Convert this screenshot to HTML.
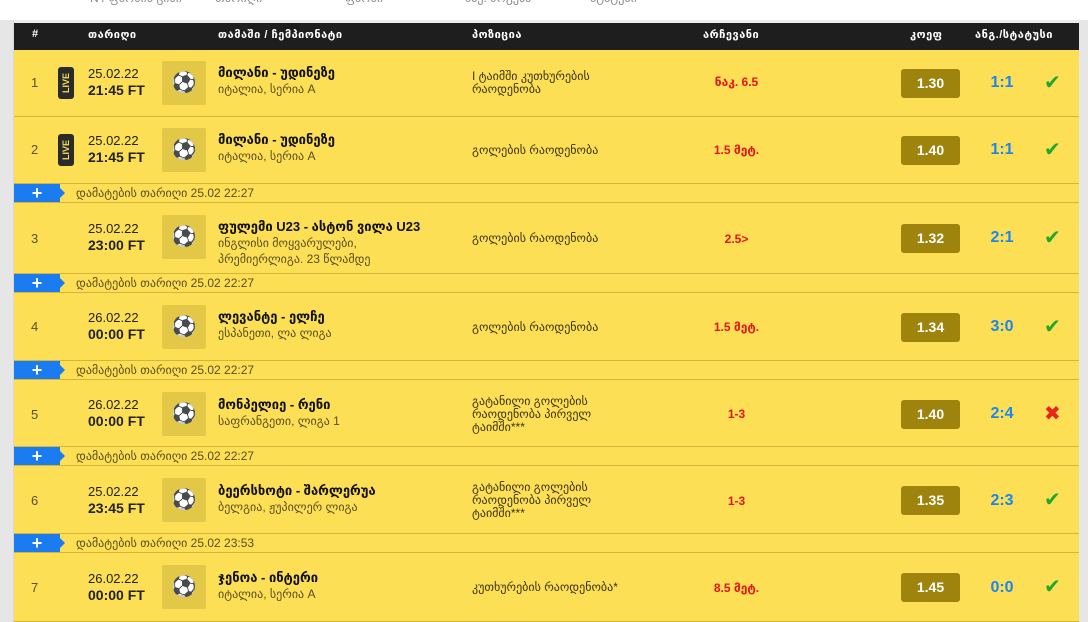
<!DOCTYPE html><html><head><meta charset="utf-8"><style>
*{margin:0;padding:0;box-sizing:border-box}
body{width:1088px;height:622px;overflow:hidden;background:#fff;font-family:"Liberation Sans","DejaVu Sans",sans-serif;position:relative}
.a{position:absolute}
.gl{left:0;top:20px;width:14px;height:602px;background:#e6e6e6;border-right:1px solid #d8d8d8}
.gr{left:1079px;top:20px;width:9px;height:602px;background:#e6e6e6}
.gt{left:0;top:20px;width:1088px;height:3px;background:#ececec}
.hd{left:14px;top:23px;width:1065px;height:27px;background:#1e1e1e;color:#fff;font-size:11px;font-weight:bold}
.hd span{position:absolute;top:5px;letter-spacing:0.5px}
.row{position:absolute;left:14px;width:1065px;background:#fcdf55;border-bottom:1px solid #d4b53a}
.row>*{position:absolute}
.num{left:17px;font-size:13px;color:#5a5030}
.live{left:44px;width:16px;height:32px;background:#2a2a2a;border-radius:3px;color:#fcdf55;font-size:9px;font-weight:bold;writing-mode:vertical-rl;transform:rotate(180deg);text-align:center;line-height:16px}
.dt{left:74px;font-size:13px;color:#222;line-height:16px}
.dt b{font-size:14px}
.ic{left:148px;width:44px;height:44px;background:#e2c846;border-radius:2px;font-size:20px;text-align:center;line-height:44px}
.tt{left:204px;font-size:13px;font-weight:bold;color:#111;line-height:16px}
.tt div{font-weight:normal;font-size:12px;color:#5a4d20;line-height:16px}
.ps{left:458px;font-size:12px;color:#3a3215;line-height:13px;width:160px}
.ch{left:640px;width:165px;text-align:center;font-size:12px;font-weight:bold;color:#e4151a}
.od{left:887px;width:59px;height:29px;background:#9e830d;border-radius:3px;color:#fff;font-weight:bold;font-size:14px;text-align:center;line-height:29px}
.sc{left:965px;width:46px;text-align:center;font-weight:bold;font-size:16px;color:#1a86f0}
.st{left:1030px;font-size:20px;font-weight:bold}
.add{position:absolute;left:14px;width:1065px;height:19px;background:#fcdf55;border-bottom:1px solid #d4b53a}
.tag{position:absolute;left:0;top:0;width:46px;height:18px;background:#1a7cf0;color:#fff;font-weight:bold;font-size:18px;line-height:18px;text-align:center}
.tag:after{content:"";position:absolute;right:-5px;top:4px;border-left:5px solid #1a7cf0;border-top:5px solid transparent;border-bottom:5px solid transparent}
.add span{position:absolute;left:62px;top:2px;font-size:12px;color:#5a4d20}
</style></head><body>
<div class="a" style="left:90px;top:-9px;font-size:12px;color:#888">N / ფსონის ცისი &nbsp;&nbsp;&nbsp;&nbsp;&nbsp;&nbsp;&nbsp;&nbsp; თარიღი</div>
<div class="a" style="left:345px;top:-9px;font-size:12px;color:#888">ფსონი</div>
<div class="a" style="left:465px;top:-9px;font-size:12px;color:#888">მაქ. მოგება</div>
<div class="a" style="left:590px;top:-9px;font-size:12px;color:#888">სტატუსი</div>
<div class="a gt"></div><div class="a gl"></div><div class="a gr"></div>
<div class="a hd"><span style="left:18px">#</span><span style="left:74px">თარიღი</span><span style="left:204px">თამაში / ჩემპიონატი</span><span style="left:458px">პოზიცია</span><span style="left:689px">არჩევანი</span><span style="left:896px">კოეფ</span><span style="left:961px">ანგ./სტატუსი</span></div>

<div class="row" style="top:50px;height:67px"><span class="num" style="top:25px">1</span><span class="live" style="top:17px">LIVE</span><div class="dt" style="top:16px">25.02.22<br><b>21:45 FT</b></div><div class="ic" style="top:11px">⚽</div><div class="tt" style="top:15px">მილანი - უდინეზე<div>იტალია, სერია A</div></div><div class="ps" style="top:20px">I ტაიმში კუთხურების რაოდენობა</div><div class="ch" style="top:25px">ნაკ. 6.5</div><div class="od" style="top:19px">1.30</div><div class="sc" style="top:24px">1:1</div><div class="st" style="top:20px;color:#1fa82a">✔</div></div>
<div class="row" style="top:117px;height:67px"><span class="num" style="top:25px">2</span><span class="live" style="top:17px">LIVE</span><div class="dt" style="top:16px">25.02.22<br><b>21:45 FT</b></div><div class="ic" style="top:11px">⚽</div><div class="tt" style="top:15px">მილანი - უდინეზე<div>იტალია, სერია A</div></div><div class="ps" style="top:27px">გოლების რაოდენობა</div><div class="ch" style="top:26px">1.5 მეტ.</div><div class="od" style="top:19px">1.40</div><div class="sc" style="top:24px">1:1</div><div class="st" style="top:20px;color:#1fa82a">✔</div></div>
<div class="add" style="top:184px"><div class="tag">+</div><span>დამატების თარიღი 25.02 22:27</span></div>
<div class="row" style="top:203px;height:71px"><span class="num" style="top:28px">3</span><div class="dt" style="top:18px">25.02.22<br><b>23:00 FT</b></div><div class="ic" style="top:12px">⚽</div><div class="tt" style="top:16px">ფულემი U23 - ასტონ ვილა U23<div>ინგლისი მოყვარულები,<br>პრემიერლიგა. 23 წლამდე</div></div><div class="ps" style="top:29px">გოლების რაოდენობა</div><div class="ch" style="top:29px">2.5&gt;</div><div class="od" style="top:21px">1.32</div><div class="sc" style="top:26px">2:1</div><div class="st" style="top:22px;color:#1fa82a">✔</div></div>
<div class="add" style="top:274px"><div class="tag">+</div><span>დამატების თარიღი 25.02 22:27</span></div>
<div class="row" style="top:293px;height:68px"><span class="num" style="top:26px">4</span><div class="dt" style="top:17px">26.02.22<br><b>00:00 FT</b></div><div class="ic" style="top:12px">⚽</div><div class="tt" style="top:16px">ლევანტე - ელჩე<div>ესპანეთი, ლა ლიგა</div></div><div class="ps" style="top:28px">გოლების რაოდენობა</div><div class="ch" style="top:27px">1.5 მეტ.</div><div class="od" style="top:20px">1.34</div><div class="sc" style="top:25px">3:0</div><div class="st" style="top:21px;color:#1fa82a">✔</div></div>
<div class="add" style="top:361px"><div class="tag">+</div><span>დამატების თარიღი 25.02 22:27</span></div>
<div class="row" style="top:380px;height:67px"><span class="num" style="top:27px">5</span><div class="dt" style="top:17px">26.02.22<br><b>00:00 FT</b></div><div class="ic" style="top:12px">⚽</div><div class="tt" style="top:17px">მონპელიე - რენი<div>საფრანგეთი, ლიგა 1</div></div><div class="ps" style="top:15px">გატანილი გოლების რაოდენობა პირველ ტაიმში***</div><div class="ch" style="top:27px">1-3</div><div class="od" style="top:20px">1.40</div><div class="sc" style="top:25px">2:4</div><div class="st" style="top:21px;color:#e8231c">✖</div></div>
<div class="add" style="top:447px"><div class="tag">+</div><span>დამატების თარიღი 25.02 22:27</span></div>
<div class="row" style="top:466px;height:68px"><span class="num" style="top:27px">6</span><div class="dt" style="top:18px">25.02.22<br><b>23:45 FT</b></div><div class="ic" style="top:12px">⚽</div><div class="tt" style="top:17px">ბეერსხოტი - შარლერუა<div>ბელგია, ჟუპილერ ლიგა</div></div><div class="ps" style="top:15px">გატანილი გოლების რაოდენობა პირველ ტაიმში***</div><div class="ch" style="top:28px">1-3</div><div class="od" style="top:20px">1.35</div><div class="sc" style="top:26px">2:3</div><div class="st" style="top:21px;color:#1fa82a">✔</div></div>
<div class="add" style="top:534px"><div class="tag">+</div><span>დამატების თარიღი 25.02 23:53</span></div>
<div class="row" style="top:553px;height:69px"><span class="num" style="top:27px">7</span><div class="dt" style="top:18px">26.02.22<br><b>00:00 FT</b></div><div class="ic" style="top:12px">⚽</div><div class="tt" style="top:17px">ჯენოა - ინტერი<div>იტალია, სერია A</div></div><div class="ps" style="top:28px">კუთხურების რაოდენობა*</div><div class="ch" style="top:28px">8.5 მეტ.</div><div class="od" style="top:20px">1.45</div><div class="sc" style="top:26px">0:0</div><div class="st" style="top:21px;color:#1fa82a">✔</div></div>
</body></html>
